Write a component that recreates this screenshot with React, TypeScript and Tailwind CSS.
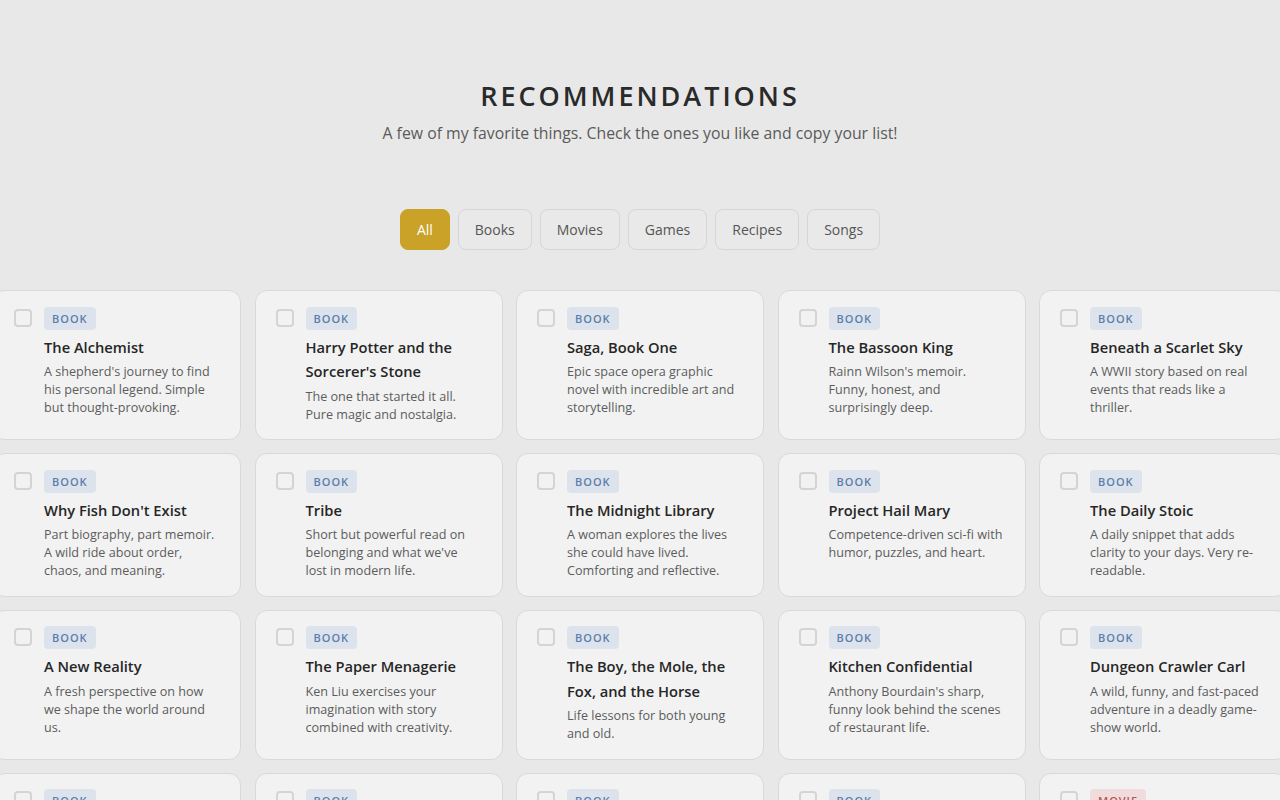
import { useState } from 'react';

type Kind = 'book' | 'movie';

type Item = {
  id: string;
  kind: Kind;
  title: string;
  note: string;
};

const items: Item[] = [
  { id: 'alchemist', kind: 'book', title: 'The Alchemist', note: "A shepherd's journey to find his personal legend. Simple but thought-provoking." },
  { id: 'hp1', kind: 'book', title: "Harry Potter and the Sorcerer's Stone", note: 'The one that started it all. Pure magic and nostalgia.' },
  { id: 'saga', kind: 'book', title: 'Saga, Book One', note: 'Epic space opera graphic novel with incredible art and storytelling.' },
  { id: 'bassoon', kind: 'book', title: 'The Bassoon King', note: "Rainn Wilson's memoir. Funny, honest, and surprisingly deep." },
  { id: 'scarlet', kind: 'book', title: 'Beneath a Scarlet Sky', note: 'A WWII story based on real events that reads like a thriller.' },
  { id: 'fish', kind: 'book', title: "Why Fish Don't Exist", note: 'Part biography, part memoir. A wild ride about order, chaos, and meaning.' },
  { id: 'tribe', kind: 'book', title: 'Tribe', note: "Short but powerful read on belonging and what we've lost in modern life." },
  { id: 'midnight', kind: 'book', title: 'The Midnight Library', note: 'A woman explores the lives she could have lived. Comforting and reflective.' },
  { id: 'hail-mary', kind: 'book', title: 'Project Hail Mary', note: 'Competence-driven sci-fi with humor, puzzles, and heart.' },
  { id: 'stoic', kind: 'book', title: 'The Daily Stoic', note: 'A daily snippet that adds clarity to your days. Very re-readable.' },
  { id: 'new-reality', kind: 'book', title: 'A New Reality', note: 'A fresh perspective on how we shape the world around us.' },
  { id: 'menagerie', kind: 'book', title: 'The Paper Menagerie', note: 'Ken Liu exercises your imagination with story combined with creativity.' },
  { id: 'boy-mole', kind: 'book', title: 'The Boy, the Mole, the Fox, and the Horse', note: 'Life lessons for both young and old.' },
  { id: 'kitchen', kind: 'book', title: 'Kitchen Confidential', note: "Anthony Bourdain's sharp, funny look behind the scenes of restaurant life." },
  { id: 'dcc', kind: 'book', title: 'Dungeon Crawler Carl', note: 'A wild, funny, and fast-paced adventure in a deadly game-show world.' },
  { id: 'atomic', kind: 'book', title: 'Atomic Habits', note: 'Small changes, remarkable results.' },
  { id: 'dune', kind: 'book', title: 'Dune', note: 'Sand, spice and politics.' },
  { id: 'martian', kind: 'book', title: 'The Martian', note: 'Science the heck out of it.' },
  { id: 'educated', kind: 'book', title: 'Educated', note: 'A memoir of learning and leaving.' },
  { id: 'interstellar', kind: 'movie', title: 'Interstellar', note: 'Love, time and black holes.' },
];

const filters = ['All', 'Books', 'Movies', 'Games', 'Recipes', 'Songs'];

const badgeStyles: Record<Kind, string> = {
  book: 'bg-[#dde3ec] text-[#5a7fab]',
  movie: 'bg-[#f0dcdc] text-[#b5574f]',
};

const Card = ({ item, checked, onToggle }: { item: Item; checked: boolean; onToggle: () => void }) => {
  return (
    <li className="flex gap-[12px] rounded-[12px] border border-[#d9d9d9] bg-[#f2f2f2] py-[15.5px] pr-[21px] pl-[20px]">
      <button
        type="button"
        onClick={onToggle}
        className={`mt-[2px] h-[18px] w-[18px] shrink-0 rounded-[4px] border-2 ${
          checked ? 'border-[#c9a227] bg-[#c9a227]' : 'border-[#d4d4d4] bg-[#f2f2f2]'
        }`}
        aria-label={item.title}
      />
      <div className="flex min-w-0 flex-col">
        <span
          className={`self-start rounded-[4px] px-[8px] text-[11px] leading-[23px] font-semibold tracking-[0.09em] uppercase ${badgeStyles[item.kind]}`}
        >
          {item.kind}
        </span>
        <h3 className="mt-[5px] text-[14.7px] leading-[24.5px] font-semibold text-[#262626]">{item.title}</h3>
        <p className="mt-[4px] text-[12.6px] leading-[18px] text-[#5c5c5c]">{item.note}</p>
      </div>
    </li>
  );
};

export default function App() {
  const [active, setActive] = useState('All');
  const [picked, setPicked] = useState<string[]>([]);

  const toggle = (id: string) =>
    setPicked((prev) => (prev.includes(id) ? prev.filter((p) => p !== id) : [...prev, id]));

  return (
    <div className="min-h-screen overflow-hidden bg-[#e8e8e8] font-['Open_Sans',sans-serif]">
      <header className="flex flex-col items-center pt-[76px]">
        <h1 className="text-[27px] leading-[40px] font-semibold tracking-[0.11em] text-[#2a2a2a]">RECOMMENDATIONS</h1>
        <p className="mt-[5px] text-[15.8px] leading-[24px] text-[#5a5a5a]">
          A few of my favorite things. Check the ones you like and copy your list!
        </p>
      </header>

      <nav className="mt-[64px] flex justify-center gap-[8px]">
        {filters.map((f) => (
          <button
            key={f}
            type="button"
            onClick={() => setActive(f)}
            className={`h-[41px] rounded-[8px] border px-[16px] text-[14px] ${
              active === f
                ? 'border-[#c9a227] bg-[#c9a227] text-white'
                : 'border-[#d6d6d6] bg-[#e9e9e9] text-[#555555]'
            }`}
          >
            {f}
          </button>
        ))}
      </nav>

      <div className="mt-[40px] flex justify-center">
        <ul className="grid w-[1294px] shrink-0 grid-cols-5 gap-x-[13.5px] gap-y-[13px]">
          {items.map((item) => (
            <Card key={item.id} item={item} checked={picked.includes(item.id)} onToggle={() => toggle(item.id)} />
          ))}
        </ul>
      </div>
    </div>
  );
}
